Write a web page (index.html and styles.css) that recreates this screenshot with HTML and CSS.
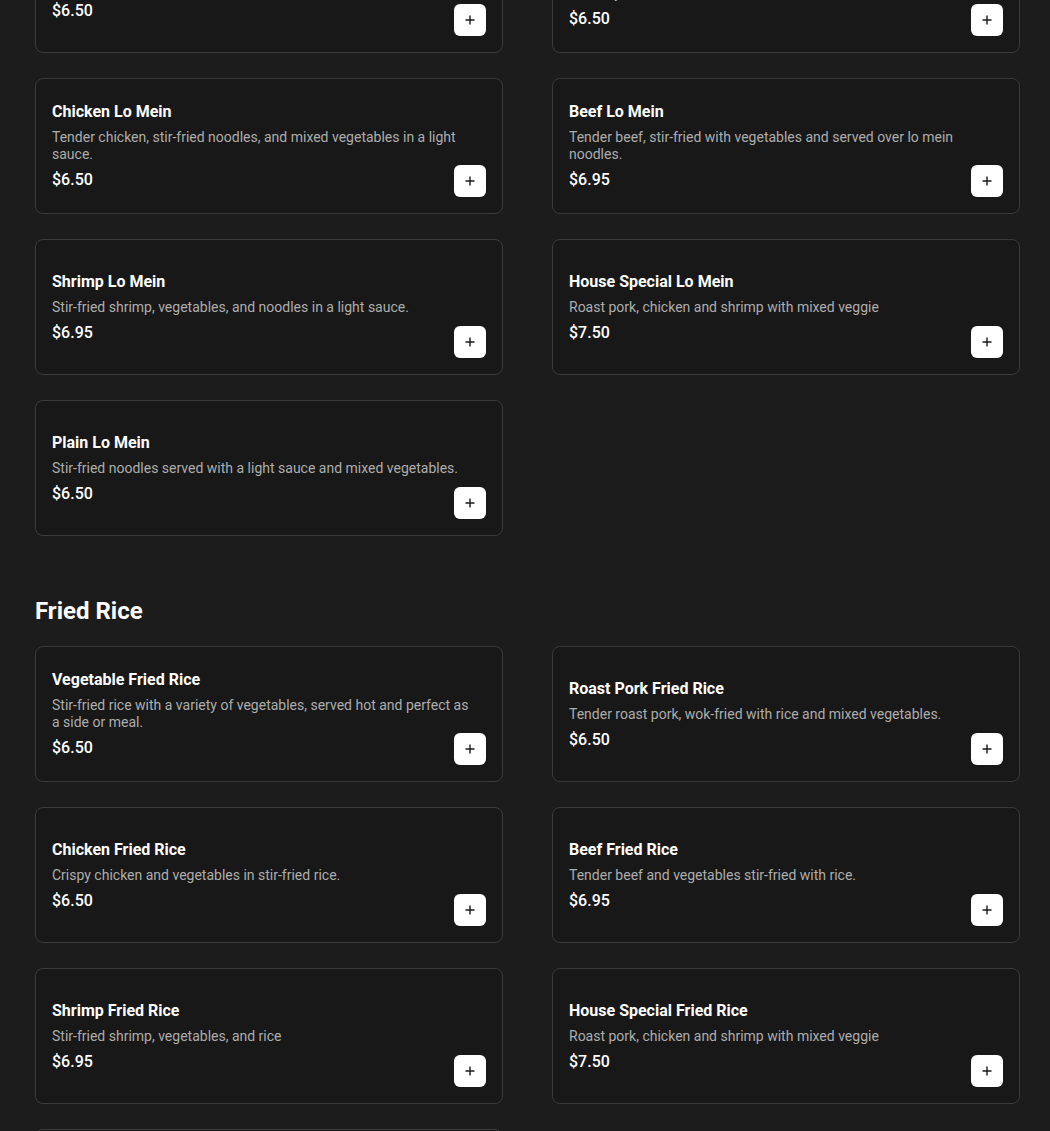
FILE: index.html
```html
<!DOCTYPE html>
<html lang="en">
<head>
<meta charset="utf-8">
<title>Menu</title>
<link rel="stylesheet" href="styles.css">
</head>
<body>
<main class="menu">
  <section class="section section-first">
    <div class="grid">
      <article class="card">
        <div class="info">
          <h3 class="name">Vegetable Lo Mein</h3>
          <p class="desc">Stir-fried noodles with fresh mixed vegetables in a light sauce.</p>
          <p class="price">$6.50</p>
        </div>
        <button class="add" aria-label="Add"><svg viewBox="0 0 12 12" width="12" height="12"><path d="M6 1.5v9M1.5 6h9" stroke="#1a1a1a" stroke-width="1.4" fill="none"/></svg></button>
      </article>
      <article class="card">
        <div class="info">
          <h3 class="name">Roast Pork Lo Mein</h3>
          <p class="desc">Tender roast pork, stir-fried noodles, and mixed vegetables tossed in a savory sauce.</p>
          <p class="price">$6.50</p>
        </div>
        <button class="add" aria-label="Add"><svg viewBox="0 0 12 12" width="12" height="12"><path d="M6 1.5v9M1.5 6h9" stroke="#1a1a1a" stroke-width="1.4" fill="none"/></svg></button>
      </article>
      <article class="card">
        <div class="info">
          <h3 class="name">Chicken Lo Mein</h3>
          <p class="desc">Tender chicken, stir-fried noodles, and mixed vegetables in a light sauce.</p>
          <p class="price">$6.50</p>
        </div>
        <button class="add" aria-label="Add"><svg viewBox="0 0 12 12" width="12" height="12"><path d="M6 1.5v9M1.5 6h9" stroke="#1a1a1a" stroke-width="1.4" fill="none"/></svg></button>
      </article>
      <article class="card">
        <div class="info">
          <h3 class="name">Beef Lo Mein</h3>
          <p class="desc">Tender beef, stir-fried with vegetables and served over lo mein noodles.</p>
          <p class="price">$6.95</p>
        </div>
        <button class="add" aria-label="Add"><svg viewBox="0 0 12 12" width="12" height="12"><path d="M6 1.5v9M1.5 6h9" stroke="#1a1a1a" stroke-width="1.4" fill="none"/></svg></button>
      </article>
      <article class="card">
        <div class="info">
          <h3 class="name">Shrimp Lo Mein</h3>
          <p class="desc">Stir-fried shrimp, vegetables, and noodles in a light sauce.</p>
          <p class="price">$6.95</p>
        </div>
        <button class="add" aria-label="Add"><svg viewBox="0 0 12 12" width="12" height="12"><path d="M6 1.5v9M1.5 6h9" stroke="#1a1a1a" stroke-width="1.4" fill="none"/></svg></button>
      </article>
      <article class="card">
        <div class="info">
          <h3 class="name">House Special Lo Mein</h3>
          <p class="desc">Roast pork, chicken and shrimp with mixed veggie</p>
          <p class="price">$7.50</p>
        </div>
        <button class="add" aria-label="Add"><svg viewBox="0 0 12 12" width="12" height="12"><path d="M6 1.5v9M1.5 6h9" stroke="#1a1a1a" stroke-width="1.4" fill="none"/></svg></button>
      </article>
      <article class="card">
        <div class="info">
          <h3 class="name">Plain Lo Mein</h3>
          <p class="desc">Stir-fried noodles served with a light sauce and mixed vegetables.</p>
          <p class="price">$6.50</p>
        </div>
        <button class="add" aria-label="Add"><svg viewBox="0 0 12 12" width="12" height="12"><path d="M6 1.5v9M1.5 6h9" stroke="#1a1a1a" stroke-width="1.4" fill="none"/></svg></button>
      </article>
    </div>
  </section>

  <section class="section">
    <h2 class="section-title">Fried Rice</h2>
    <div class="grid">
      <article class="card">
        <div class="info">
          <h3 class="name">Vegetable Fried Rice</h3>
          <p class="desc">Stir-fried rice with a variety of vegetables, served hot and perfect as a side or meal.</p>
          <p class="price">$6.50</p>
        </div>
        <button class="add" aria-label="Add"><svg viewBox="0 0 12 12" width="12" height="12"><path d="M6 1.5v9M1.5 6h9" stroke="#1a1a1a" stroke-width="1.4" fill="none"/></svg></button>
      </article>
      <article class="card">
        <div class="info">
          <h3 class="name">Roast Pork Fried Rice</h3>
          <p class="desc">Tender roast pork, wok-fried with rice and mixed vegetables.</p>
          <p class="price">$6.50</p>
        </div>
        <button class="add" aria-label="Add"><svg viewBox="0 0 12 12" width="12" height="12"><path d="M6 1.5v9M1.5 6h9" stroke="#1a1a1a" stroke-width="1.4" fill="none"/></svg></button>
      </article>
      <article class="card">
        <div class="info">
          <h3 class="name">Chicken Fried Rice</h3>
          <p class="desc">Crispy chicken and vegetables in stir-fried rice.</p>
          <p class="price">$6.50</p>
        </div>
        <button class="add" aria-label="Add"><svg viewBox="0 0 12 12" width="12" height="12"><path d="M6 1.5v9M1.5 6h9" stroke="#1a1a1a" stroke-width="1.4" fill="none"/></svg></button>
      </article>
      <article class="card">
        <div class="info">
          <h3 class="name">Beef Fried Rice</h3>
          <p class="desc">Tender beef and vegetables stir-fried with rice.</p>
          <p class="price">$6.95</p>
        </div>
        <button class="add" aria-label="Add"><svg viewBox="0 0 12 12" width="12" height="12"><path d="M6 1.5v9M1.5 6h9" stroke="#1a1a1a" stroke-width="1.4" fill="none"/></svg></button>
      </article>
      <article class="card">
        <div class="info">
          <h3 class="name">Shrimp Fried Rice</h3>
          <p class="desc">Stir-fried shrimp, vegetables, and rice</p>
          <p class="price">$6.95</p>
        </div>
        <button class="add" aria-label="Add"><svg viewBox="0 0 12 12" width="12" height="12"><path d="M6 1.5v9M1.5 6h9" stroke="#1a1a1a" stroke-width="1.4" fill="none"/></svg></button>
      </article>
      <article class="card">
        <div class="info">
          <h3 class="name">House Special Fried Rice</h3>
          <p class="desc">Roast pork, chicken and shrimp with mixed veggie</p>
          <p class="price">$7.50</p>
        </div>
        <button class="add" aria-label="Add"><svg viewBox="0 0 12 12" width="12" height="12"><path d="M6 1.5v9M1.5 6h9" stroke="#1a1a1a" stroke-width="1.4" fill="none"/></svg></button>
      </article>
      <article class="card">
        <div class="info">
          <h3 class="name">Plain Fried Rice</h3>
          <p class="desc">Classic wok-fried rice with egg and scallions.</p>
          <p class="price">$6.00</p>
        </div>
        <button class="add" aria-label="Add"><svg viewBox="0 0 12 12" width="12" height="12"><path d="M6 1.5v9M1.5 6h9" stroke="#1a1a1a" stroke-width="1.4" fill="none"/></svg></button>
      </article>
    </div>
  </section>
</main>
</body>
</html>
```

FILE: styles.css
```css
html, body {
  margin: 0;
  padding: 0;
  background: #1c1c1c;
}

body {
  font-family: Roboto, "Liberation Sans", Arial, sans-serif;
  color: #ffffff;
  overflow: hidden;
}

.menu {
  width: 985px;
  padding-left: 35px;
  margin-top: -83px;
}

.section + .section {
  margin-top: 59px;
}

.section-title {
  margin: 0 0 19px 0;
  font-size: 24px;
  line-height: 32px;
  font-weight: 700;
  color: #ffffff;
}

.grid {
  display: grid;
  grid-template-columns: 1fr 1fr;
  column-gap: 49px;
  row-gap: 25px;
}

.card {
  box-sizing: border-box;
  min-height: 136px;
  display: grid;
  padding: 16px;
  background: #181818;
  border: 1px solid #3b3b3b;
  border-radius: 8px;
}

.info {
  grid-area: 1 / 1;
  align-self: center;
  margin-right: 10px;
}

.name {
  margin: 0 0 5px 0;
  font-size: 16px;
  line-height: 24px;
  font-weight: 700;
  color: #ffffff;
}

.desc {
  margin: 0 0 5px 0;
  font-size: 14px;
  line-height: 17px;
  color: #adadad;
}

.price {
  margin: 0;
  font-size: 16px;
  line-height: 24px;
  font-weight: 500;
  color: #ffffff;
}

.add {
  grid-area: 1 / 1;
  justify-self: end;
  align-self: end;
  width: 32px;
  height: 32px;
  padding: 0;
  border: none;
  border-radius: 6px;
  background: #ffffff;
  display: flex;
  align-items: center;
  justify-content: center;
  cursor: pointer;
}

.add svg {
  display: block;
}
```
